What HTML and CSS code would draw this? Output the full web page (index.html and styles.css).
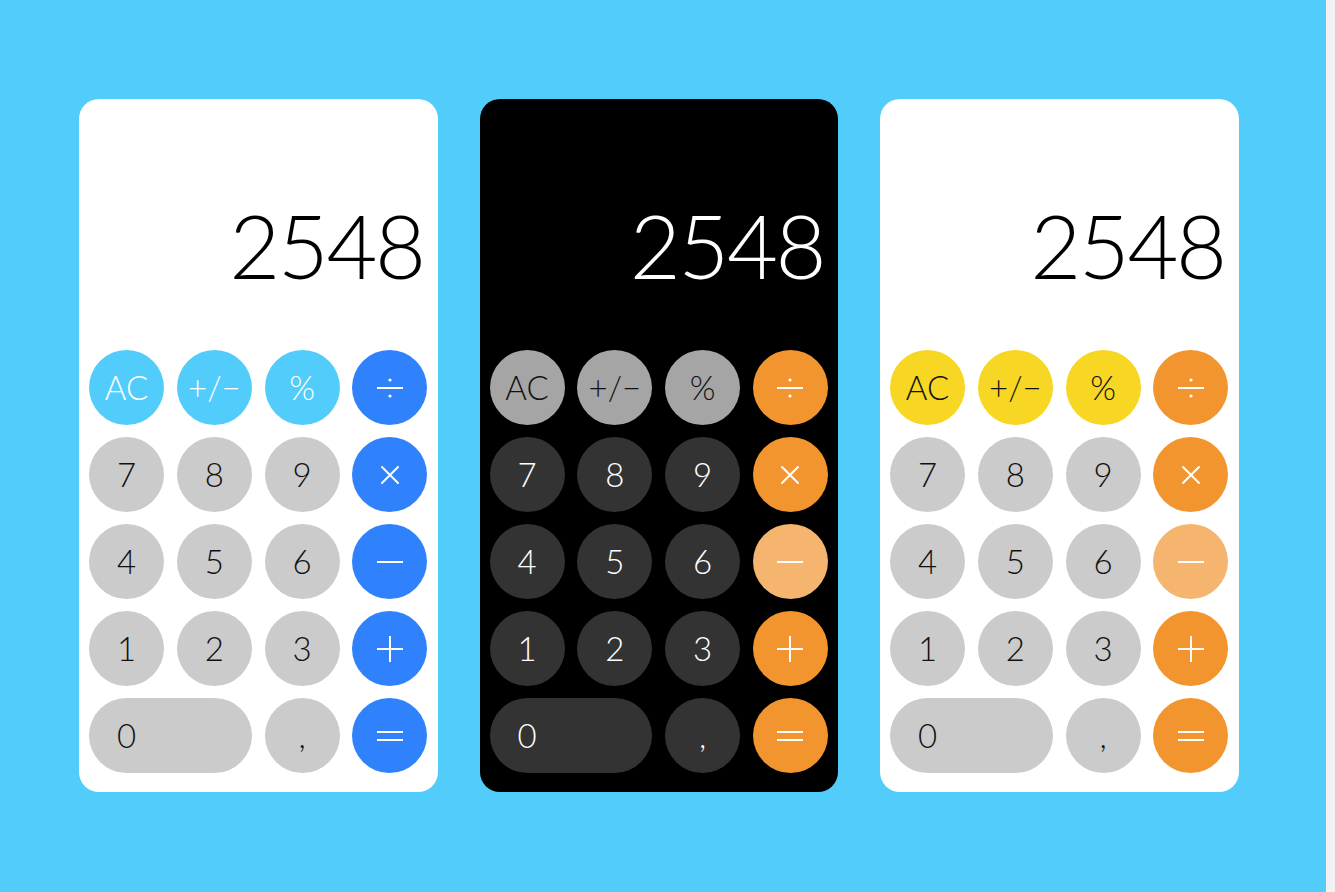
FILE: index.html
```html
<!DOCTYPE html>
<html lang="en">
<head>
<meta charset="utf-8">
<title>Calculators</title>
<link rel="stylesheet" href="styles.css">
</head>
<body>
<main class="stage">
  <section class="calc calc-blue">
    <div class="display">2548</div>
    <div class="keys">
      <div class="key fn">AC</div><div class="key fn">+/−</div><div class="key fn">%</div>
      <div class="key op" aria-label="÷"><svg class="ico" viewBox="0 0 26 26"><path d="M0.5 13H25.5"/><circle cx="13" cy="5" r="1.6"/><circle cx="13" cy="21" r="1.6"/></svg></div>
      <div class="key num">7</div><div class="key num">8</div><div class="key num">9</div>
      <div class="key op" aria-label="×"><svg class="ico" viewBox="0 0 26 26"><path d="M5 5L21 21M21 5L5 21"/></svg></div>
      <div class="key num">4</div><div class="key num">5</div><div class="key num">6</div>
      <div class="key op" aria-label="−"><svg class="ico" viewBox="0 0 26 26"><path d="M0.5 13H25.5"/></svg></div>
      <div class="key num">1</div><div class="key num">2</div><div class="key num">3</div>
      <div class="key op" aria-label="+"><svg class="ico" viewBox="0 0 26 26"><path d="M0.5 13H25.5M13 0.5V25.5"/></svg></div>
      <div class="key num zero"><span class="zero-label">0</span></div><div class="key num">,</div>
      <div class="key op" aria-label="="><svg class="ico" viewBox="0 0 26 26"><path d="M0.5 9H25.5M0.5 17H25.5"/></svg></div>
    </div>
  </section>
  <section class="calc calc-dark">
    <div class="display">2548</div>
    <div class="keys">
      <div class="key fn">AC</div><div class="key fn">+/−</div><div class="key fn">%</div>
      <div class="key op" aria-label="÷"><svg class="ico" viewBox="0 0 26 26"><path d="M0.5 13H25.5"/><circle cx="13" cy="5" r="1.6"/><circle cx="13" cy="21" r="1.6"/></svg></div>
      <div class="key num">7</div><div class="key num">8</div><div class="key num">9</div>
      <div class="key op" aria-label="×"><svg class="ico" viewBox="0 0 26 26"><path d="M5 5L21 21M21 5L5 21"/></svg></div>
      <div class="key num">4</div><div class="key num">5</div><div class="key num">6</div>
      <div class="key op op-soft" aria-label="−"><svg class="ico" viewBox="0 0 26 26"><path d="M0.5 13H25.5"/></svg></div>
      <div class="key num">1</div><div class="key num">2</div><div class="key num">3</div>
      <div class="key op" aria-label="+"><svg class="ico" viewBox="0 0 26 26"><path d="M0.5 13H25.5M13 0.5V25.5"/></svg></div>
      <div class="key num zero"><span class="zero-label">0</span></div><div class="key num">,</div>
      <div class="key op" aria-label="="><svg class="ico" viewBox="0 0 26 26"><path d="M0.5 9H25.5M0.5 17H25.5"/></svg></div>
    </div>
  </section>
  <section class="calc calc-yellow">
    <div class="display">2548</div>
    <div class="keys">
      <div class="key fn">AC</div><div class="key fn">+/−</div><div class="key fn">%</div>
      <div class="key op" aria-label="÷"><svg class="ico" viewBox="0 0 26 26"><path d="M0.5 13H25.5"/><circle cx="13" cy="5" r="1.6"/><circle cx="13" cy="21" r="1.6"/></svg></div>
      <div class="key num">7</div><div class="key num">8</div><div class="key num">9</div>
      <div class="key op" aria-label="×"><svg class="ico" viewBox="0 0 26 26"><path d="M5 5L21 21M21 5L5 21"/></svg></div>
      <div class="key num">4</div><div class="key num">5</div><div class="key num">6</div>
      <div class="key op op-soft" aria-label="−"><svg class="ico" viewBox="0 0 26 26"><path d="M0.5 13H25.5"/></svg></div>
      <div class="key num">1</div><div class="key num">2</div><div class="key num">3</div>
      <div class="key op" aria-label="+"><svg class="ico" viewBox="0 0 26 26"><path d="M0.5 13H25.5M13 0.5V25.5"/></svg></div>
      <div class="key num zero"><span class="zero-label">0</span></div><div class="key num">,</div>
      <div class="key op" aria-label="="><svg class="ico" viewBox="0 0 26 26"><path d="M0.5 9H25.5M0.5 17H25.5"/></svg></div>
    </div>
  </section>
</main>
</body>
</html>
```
FILE: styles.css
```css
* { box-sizing: border-box; }
html, body { margin: 0; padding: 0; }
body {
  background: #f2f2f4;
  font-family: "Lato", "Noto Sans", sans-serif;
  height: 892px;
  overflow: hidden;
}
.stage {
  width: 1326px;
  height: 892px;
  background: #52cdfb;
  display: flex;
  align-items: flex-start;
  gap: 42px;
  padding: 99px 0 0 79px;
}
.calc {
  width: 358.5px;
  height: 693px;
  border-radius: 20px;
  background: #fff;
  display: flex;
  flex-direction: column;
}
.display {
  height: 252px;
  display: flex;
  align-items: flex-end;
  justify-content: flex-end;
  padding: 0 14px 61px 0;
  font-size: 88px;
  font-weight: 300;
  line-height: 1;
  letter-spacing: -2.5px;
  color: #000;
}
.keys {
  display: grid;
  grid-template-columns: repeat(4, 75px);
  grid-auto-rows: 75px;
  justify-content: space-between;
  row-gap: 12px;
  padding: 0 10px 19px;
}
.key {
  border-radius: 50%;
  display: flex;
  align-items: center;
  justify-content: center;
  font-size: 33px;
  font-weight: 300;
  line-height: 1;
}
.key.op { color: #fff; }
.ico {
  width: 26px;
  height: 26px;
  fill: #fff;
  stroke: #fff;
  stroke-width: 2;
  stroke-linecap: round;
}
.ico circle { stroke: none; }
.zero {
  grid-column: span 2;
  border-radius: 38px;
  justify-content: flex-start;
}
.zero-label { width: 75px; text-align: center; }

/* blue theme */
.calc-blue .fn { background: #52cdfb; color: #fff; }
.calc-blue .op { background: #2f82fb; }
.calc-blue .num { background: #cbcbcb; color: #111; }

/* dark theme */
.calc-dark { background: #000; }
.calc-dark .display { color: #fff; }
.calc-dark .fn { background: #a5a5a5; color: #111; }
.calc-dark .num { background: #333333; color: #fff; }
.calc-dark .op { background: #f2952f; }
.calc-dark .op-soft { background: #f5b56f; }

/* yellow theme */
.calc-yellow .fn { background: #f7d624; color: #111; }
.calc-yellow .num { background: #cbcbcb; color: #111; }
.calc-yellow .op { background: #f2952f; }
.calc-yellow .op-soft { background: #f5b56f; }
```
